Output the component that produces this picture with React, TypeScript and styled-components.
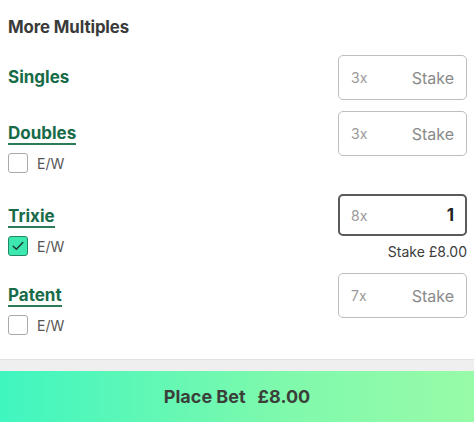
import React from "react";
import styled, { createGlobalStyle } from "styled-components";

type Bet = {
    id: string;
    title: string;
    lines: number;
    eachWay: boolean | null;
    stake: string;
    underline: boolean;
    gap: number;
};

const bets: Bet[] = [
    { id: "singles", title: "Singles", lines: 3, eachWay: null, stake: "", underline: false, gap: 18 },
    { id: "doubles", title: "Doubles", lines: 3, eachWay: false, stake: "", underline: true, gap: 11 },
    { id: "trixie", title: "Trixie", lines: 8, eachWay: true, stake: "1", underline: true, gap: 21 },
    { id: "patent", title: "Patent", lines: 7, eachWay: false, stake: "", underline: true, gap: 13 },
];

const GlobalStyle = createGlobalStyle`
    html, body {
        margin: 0;
        padding: 0;
        background: #ffffff;
        font-family: Inter, "Liberation Sans", sans-serif;
    }
`;

const App: React.FC = () => {
    return (
        <Page>
            <GlobalStyle />
            <Content>
                <Heading>More Multiples</Heading>
                {bets.map((b) => (
                    <BetRow key={b.id} bet={b} />
                ))}
            </Content>
            <Divider />
            <PlaceBet>
                <span>Place Bet</span>
                <span>£8.00</span>
            </PlaceBet>
        </Page>
    );
};

const BetRow: React.FC<{ bet: Bet }> = ({ bet }) => {
    const active = bet.stake !== "";
    return (
        <Row Gap={bet.gap}>
            <Left>
                <TitleCell>
                    <Title Underline={bet.underline}>{bet.title}</Title>
                </TitleCell>
                {bet.eachWay !== null && (
                    <EachWay>
                        <Box Checked={bet.eachWay}>
                            {bet.eachWay && (
                                <svg width="12" height="10" viewBox="0 0 12 10">
                                    <path d="M1.2 5.2 L4.4 8.2 L10.8 1.6" fill="none" stroke="#1c3b30" strokeWidth="1.5" strokeLinecap="round" strokeLinejoin="round" />
                                </svg>
                            )}
                        </Box>
                        <EwLabel>E/W</EwLabel>
                    </EachWay>
                )}
            </Left>
            <Right>
                <StakeBox Active={active}>
                    <Lines>{bet.lines}x</Lines>
                    {active ? <Amount>{bet.stake}</Amount> : <Placeholder>Stake</Placeholder>}
                </StakeBox>
                {active && <Caption>Stake £8.00</Caption>}
            </Right>
        </Row>
    );
};

const Page = styled.div`
    height: 422px;
    display: flex;
    flex-direction: column;
`;

const Content = styled.div`
    flex: 1;
    padding: 0 7px 0 8px;
`;

const Heading = styled.div`
    padding-top: 17px;
    font-size: 16.8px;
    font-weight: 700;
    color: #3a3a3a;
    line-height: 20px;
    letter-spacing: -0.1px;
`;

const Row = styled.div<{ Gap: number }>`
    display: flex;
    justify-content: space-between;
    align-items: flex-start;
    margin-top: ${(p) => p.Gap}px;
`;

const Left = styled.div`
    display: flex;
    flex-direction: column;
`;

const TitleCell = styled.div`
    height: 44px;
    display: flex;
    align-items: center;
`;

const Title = styled.span<{ Underline: boolean }>`
    font-size: 17px;
    font-weight: 700;
    color: #176b48;
    line-height: 20px;
    padding-top: ${(p) => (p.Underline ? 2 : 0)}px;
    border-bottom: ${(p) => (p.Underline ? "2px solid #2b7a58" : "none")};
`;

const EachWay = styled.div`
    display: flex;
    align-items: center;
    gap: 9px;
    margin-top: -2px;
`;

const Box = styled.div<{ Checked: boolean }>`
    width: 20px;
    height: 20px;
    box-sizing: border-box;
    border-radius: 3px;
    border: 1.5px solid ${(p) => (p.Checked ? "#1f8a62" : "#a9a9a9")};
    background: ${(p) => (p.Checked ? "#3de8b0" : "#ffffff")};
    display: flex;
    align-items: center;
    justify-content: center;
`;

const EwLabel = styled.span`
    font-size: 14px;
    color: #555555;
`;

const Right = styled.div`
    display: flex;
    flex-direction: column;
    align-items: flex-end;
`;

const StakeBox = styled.div<{ Active: boolean }>`
    width: 129px;
    height: ${(p) => (p.Active ? 42 : 45)}px;
    box-sizing: border-box;
    border: ${(p) => (p.Active ? "2px solid #5a5a5a" : "1px solid #bdbdbd")};
    border-radius: 5px;
    display: flex;
    align-items: center;
    justify-content: space-between;
    padding: 0 ${(p) => (p.Active ? 11 : 12)}px 0 ${(p) => (p.Active ? 11 : 12)}px;
`;

const Lines = styled.span`
    font-size: 14px;
    color: #9a9a9a;
`;

const Placeholder = styled.span`
    font-size: 16px;
    color: #8a8a8a;
`;

const Amount = styled.span`
    font-size: 17px;
    font-weight: 700;
    color: #222222;
`;

const Caption = styled.div`
    margin-top: 7px;
    font-size: 14px;
    color: #3c3c3c;
    line-height: 17px;
`;

const Divider = styled.div`
    height: 11px;
    background: #efefef;
    border-top: 1px solid #e2e2e2;
`;

const PlaceBet = styled.div`
    height: 51px;
    display: flex;
    align-items: center;
    justify-content: center;
    gap: 12px;
    background: linear-gradient(90deg, #3ff6c0 0%, #7ff9ac 60%, #98fba8 100%);
    font-size: 18px;
    font-weight: 700;
    color: #3b3f3a;
`;

export default App;
